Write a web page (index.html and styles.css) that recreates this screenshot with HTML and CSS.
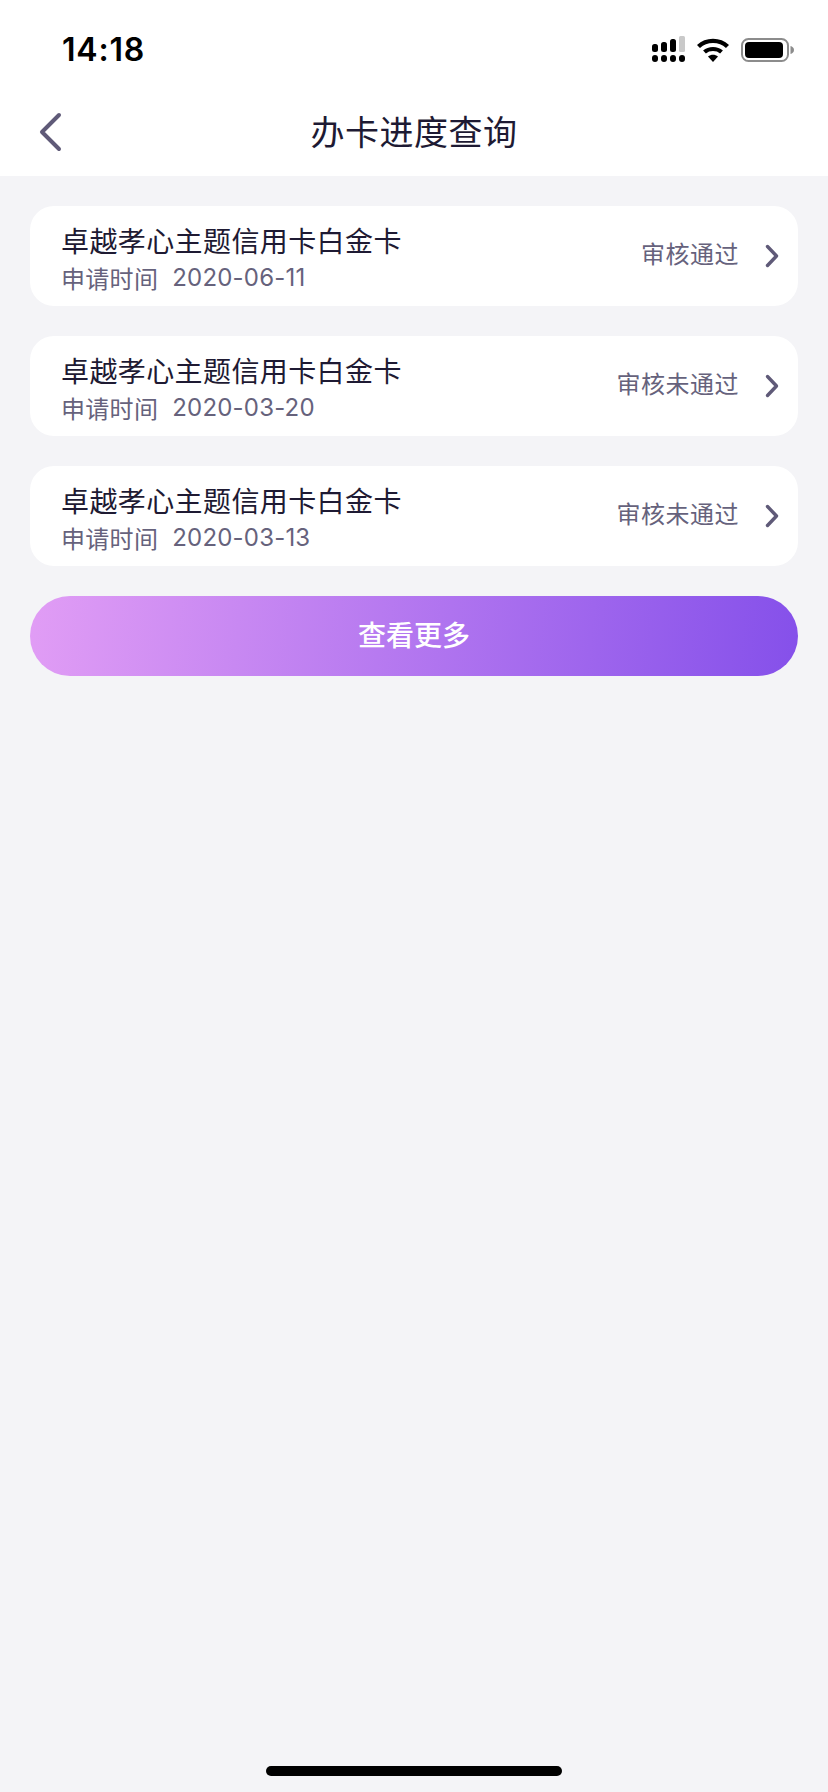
FILE: index.html
```html
<!DOCTYPE html>
<html lang="zh-CN">
<head>
  <meta charset="UTF-8" />
  <meta name="viewport" content="width=device-width, initial-scale=1.0" />
  <title>办卡进度查询</title>
  <link rel="stylesheet" href="styles.css">
</head>
<body>
  <div class="page">
    <div class="status-bar">
      <span class="time">14:18</span>
      <div class="status-icons">
        <svg class="signal" width="33" height="26" viewBox="0 0 33 26">
          <rect x="0" y="8" width="6" height="8" rx="2.5" fill="#000"/>
          <rect x="9" y="6" width="6" height="10" rx="2.5" fill="#000"/>
          <rect x="18" y="3" width="6" height="13" rx="2.5" fill="#000"/>
          <rect x="27" y="0" width="6" height="16" rx="1.5" fill="#c9c9c9"/>
          <rect x="0" y="19" width="6" height="7" rx="3" fill="#000"/>
          <rect x="9" y="19" width="6" height="7" rx="3" fill="#000"/>
          <rect x="18" y="19" width="6" height="7" rx="3" fill="#000"/>
          <rect x="27" y="19" width="6" height="7" rx="3" fill="#000"/>
        </svg>
        <svg class="wifi" width="32" height="24" viewBox="0 0 32 24">
          <path d="M1.5 8.5 C9.5 1 22.5 1 30.5 8.5" fill="none" stroke="#000" stroke-width="4.4"/>
          <path d="M7.5 14 C12 10 20 10 24.5 14" fill="none" stroke="#000" stroke-width="4.2"/>
          <path d="M11 18.5 C14 16 18 16 21 18.5 L16 24 Z" fill="#000"/>
        </svg>
        <svg class="battery" width="53" height="24" viewBox="0 0 53 24">
          <rect x="1" y="1" width="46" height="22" rx="6.5" fill="none" stroke="#8c8c8c" stroke-width="2"/>
          <rect x="4" y="4" width="38" height="16" rx="4" fill="#000"/>
          <path d="M49.5 8 C51.5 8.6 53 10 53 12 C53 14 51.5 15.4 49.5 16 Z" fill="#8c8c8c"/>
        </svg>
      </div>
    </div>

    <div class="nav-bar">
      <svg class="back" width="24" height="40" viewBox="0 0 24 40">
        <path d="M21 3 L4 20 L21 37" fill="none" stroke="#5f5a78" stroke-width="4" stroke-linecap="round" stroke-linejoin="round"/>
      </svg>
      <h1 class="nav-title">办卡进度查询</h1>
    </div>

    <main class="content">
      <div class="card">
        <div class="card-info">
          <div class="card-name">卓越孝心主题信用卡白金卡</div>
          <div class="card-date"><span class="date-label">申请时间</span><span class="date-value">2020-06-11</span></div>
        </div>
        <span class="card-status">审核通过</span>
        <svg class="arrow" width="14" height="24" viewBox="0 0 14 24">
          <path d="M2.5 2.5 L11.5 12 L2.5 21.5" fill="none" stroke="#5f5a78" stroke-width="3.4" stroke-linecap="round" stroke-linejoin="round"/>
        </svg>
      </div>

      <div class="card">
        <div class="card-info">
          <div class="card-name">卓越孝心主题信用卡白金卡</div>
          <div class="card-date"><span class="date-label">申请时间</span><span class="date-value">2020-03-20</span></div>
        </div>
        <span class="card-status">审核未通过</span>
        <svg class="arrow" width="14" height="24" viewBox="0 0 14 24">
          <path d="M2.5 2.5 L11.5 12 L2.5 21.5" fill="none" stroke="#5f5a78" stroke-width="3.4" stroke-linecap="round" stroke-linejoin="round"/>
        </svg>
      </div>

      <div class="card">
        <div class="card-info">
          <div class="card-name">卓越孝心主题信用卡白金卡</div>
          <div class="card-date"><span class="date-label">申请时间</span><span class="date-value">2020-03-13</span></div>
        </div>
        <span class="card-status">审核未通过</span>
        <svg class="arrow" width="14" height="24" viewBox="0 0 14 24">
          <path d="M2.5 2.5 L11.5 12 L2.5 21.5" fill="none" stroke="#5f5a78" stroke-width="3.4" stroke-linecap="round" stroke-linejoin="round"/>
        </svg>
      </div>

      <button class="more-btn" type="button">查看更多</button>
    </main>

    <div class="home-area">
      <div class="home-bar"></div>
    </div>
  </div>
</body>
</html>
```

FILE: styles.css
```css
html, body {
  margin: 0;
  padding: 0;
  box-sizing: border-box;
}

*, *::before, *::after {
  box-sizing: inherit;
}

body {
  font-family: "Inter", "Noto Sans CJK SC", sans-serif;
  background: #f4f4f7;
}

.page {
  display: flex;
  flex-direction: column;
  height: 1792px;
}

.status-bar {
  display: flex;
  align-items: center;
  justify-content: space-between;
  height: 88px;
  padding: 10px 34px 0 62px;
  background: #fff;
}

.time {
  font-size: 32px;
  font-weight: 600;
  color: #000;
  letter-spacing: 0.8px;
}

.status-icons {
  display: flex;
  align-items: flex-end;
  gap: 12px;
}

.nav-bar {
  display: flex;
  align-items: center;
  justify-content: center;
  position: relative;
  height: 88px;
  padding-bottom: 4px;
  background: #fff;
}

.back {
  position: absolute;
  left: 38px;
  top: 24px;
}

.nav-title {
  margin: 0;
  font-family: "Noto Sans CJK SC", sans-serif;
  font-size: 34px;
  font-weight: 400;
  letter-spacing: 0.5px;
  color: #1e1a33;
}

.content {
  flex: 1;
  display: flex;
  flex-direction: column;
  gap: 30px;
  padding: 30px 30px 0;
}

.card {
  display: flex;
  align-items: center;
  height: 100px;
  padding: 0 19px 0 31px;
  background: #fff;
  border-radius: 24px;
}

.card-info {
  flex: 1;
  padding-top: 4px;
}

.card-name {
  font-family: "Noto Sans CJK SC", sans-serif;
  font-size: 28px;
  line-height: 36px;
  letter-spacing: 0.4px;
  color: #1e1a33;
}

.card-date {
  display: flex;
  margin-top: 4px;
  font-size: 24px;
  line-height: 32px;
  color: #66627c;
}

.date-label {
  font-family: "Noto Sans CJK SC", sans-serif;
  letter-spacing: 0.3px;
}

.date-value {
  margin-left: 14px;
  letter-spacing: 0.2px;
}

.card-status {
  margin-right: 26px;
  margin-bottom: 7px;
  font-family: "Noto Sans CJK SC", sans-serif;
  font-size: 24px;
  letter-spacing: 0.5px;
  color: #66627c;
}

.more-btn {
  height: 80px;
  padding: 0 0 4px;
  border: none;
  border-radius: 40px;
  background: linear-gradient(95deg, #e19df5 0%, #8550ea 100%);
  font-family: "Noto Sans CJK SC", sans-serif;
  font-size: 28px;
  font-weight: 500;
  color: #fff;
}

.home-area {
  display: flex;
  justify-content: center;
  height: 26px;
}

.home-bar {
  width: 296px;
  height: 10px;
  border-radius: 5px;
  background: #000;
}
```
